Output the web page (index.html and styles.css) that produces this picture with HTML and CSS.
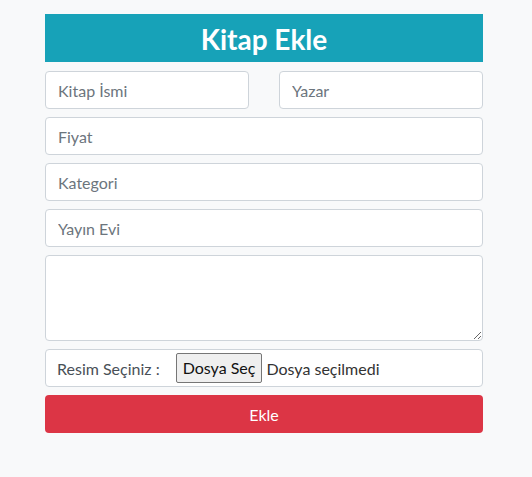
FILE: index.html
```html
<!DOCTYPE html>
<html lang="tr">
<head>
<meta charset="utf-8">
<link rel="stylesheet" href="styles.css">
</head>
<body>
<div class="wrap">
  <h1 class="title">Kitap Ekle</h1>
  <form class="form">
    <div class="row">
      <input class="field" type="text" placeholder="Kitap İsmi">
      <input class="field" type="text" placeholder="Yazar">
    </div>
    <input class="field" type="text" placeholder="Fiyat">
    <input class="field" type="text" placeholder="Kategori">
    <input class="field" type="text" placeholder="Yayın Evi">
    <textarea class="field area"></textarea>
    <div class="field filerow">
      <span class="label">Resim Seçiniz :</span>
      <span class="filebtn">Dosya Seç</span>
      <span class="filename">Dosya seçilmedi</span>
    </div>
    <button type="button" class="submit">Ekle</button>
  </form>
</div>
</body>
</html>
```
FILE: styles.css
```css
html, body {
  margin: 0;
  padding: 0;
  background: #f8f9fa;
  font-family: Lato, "Open Sans", sans-serif;
}
.wrap {
  width: 438px;
  margin: 14px 0 0 45px;
}
.title {
  margin: 0;
  height: 48px;
  background: #17a2b8;
  color: #fff;
  font-size: 28px;
  font-weight: 700;
  line-height: 50px;
  text-align: center;
}
.form {
  display: flex;
  flex-direction: column;
  gap: 8px;
  margin-top: 9px;
}
.row {
  display: grid;
  grid-template-columns: 1fr 1fr;
  column-gap: 30px;
}
.field {
  box-sizing: border-box;
  width: 100%;
  height: 38px;
  margin: 0;
  padding: 0 12px;
  border: 1px solid #ced4da;
  border-radius: 4px;
  background: #fff;
  font-family: inherit;
  font-size: 16px;
  color: #495057;
  outline: none;
}
.field::placeholder {
  color: #6c757d;
}
.area {
  height: 86px;
  resize: vertical;
  padding: 6px 12px;
}
.filerow {
  display: flex;
  align-items: center;
  padding-left: 11px;
}
.label {
  color: #495057;
  margin-right: 16px;
}
.filebtn {
  box-sizing: border-box;
  height: 30px;
  line-height: 28px;
  padding: 0 6px;
  background: #efefef;
  border: 1px solid #767676;
  border-radius: 2px;
  color: #111;
}
.filename {
  margin-left: 4px;
  color: #333;
}
.submit {
  height: 38px;
  border: none;
  border-radius: 4px;
  background: #dc3545;
  color: #fff;
  font-family: inherit;
  font-size: 16px;
}
```
